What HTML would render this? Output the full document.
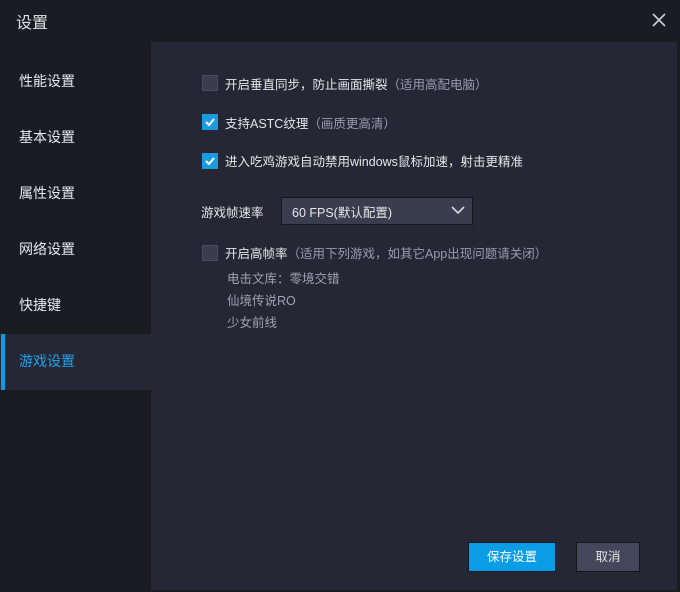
<!DOCTYPE html><html><head><meta charset="utf-8"><style>
*{margin:0;padding:0;box-sizing:border-box}
body{width:680px;height:592px;background:#1b1c22;font-family:"Liberation Sans","Noto Sans CJK SC",sans-serif;color:#e6e6ea;position:relative;overflow:hidden;font-size:12.5px}
.a{position:absolute;white-space:nowrap}
.side{font-size:14px;color:#e8e8ec;left:19px}
.panel{left:151px;top:42px;width:526px;height:548px;background:#252735}
.cb{width:16px;height:16px;background:#3a3d4b;border:1px solid #4a4d5c}
.cb.on{background:#1a9be0;border-color:#1a9be0}
.g{color:#9a9cab}
.l{color:#a0a2b0}
</style></head><body>
<div class="a" style="left:16px;top:9px;font-size:16px;color:#e0e0e4">设置</div>
<svg class="a" style="left:651px;top:12px" width="16" height="16"><path d="M2 2L14 14M14 2L2 14" stroke="#d0d0d4" stroke-width="1.6"/></svg>
<div class="a panel"></div>
<div class="a side" style="top:71px">性能设置</div>
<div class="a side" style="top:127px">基本设置</div>
<div class="a side" style="top:183px">属性设置</div>
<div class="a side" style="top:239px">网络设置</div>
<div class="a side" style="top:295px">快捷键</div>
<div class="a" style="left:0;top:334px;width:151px;height:56px;background:#252735"></div>
<div class="a" style="left:1px;top:334px;width:4px;height:56px;background:#0a9de6"></div>
<div class="a side" style="top:351px;color:#1fa3ea">游戏设置</div>

<div class="a cb" style="left:202px;top:75px"></div>
<div class="a" style="left:225px;top:74px">开启垂直同步，防止画面撕裂<span class="g">（适用高配电脑）</span></div>
<div class="a cb on" style="left:202px;top:114px"><svg width="14" height="14" style="position:absolute;left:0;top:0"><path d="M3 7L6 10L11 4" stroke="#fff" stroke-width="2" fill="none"/></svg></div>
<div class="a" style="left:225px;top:113px">支持ASTC纹理<span class="g">（画质更高清）</span></div>
<div class="a cb on" style="left:202px;top:153px"><svg width="14" height="14" style="position:absolute;left:0;top:0"><path d="M3 7L6 10L11 4" stroke="#fff" stroke-width="2" fill="none"/></svg></div>
<div class="a" style="left:225px;top:151px">进入吃鸡游戏自动禁用windows鼠标加速，射击更精准</div>

<div class="a" style="left:201px;top:202px">游戏帧速率</div>
<div class="a" style="left:281px;top:197px;width:192px;height:28px;background:#3a3d4d;border:1px solid #16171d"></div>
<div class="a" style="left:292px;top:202px">60 FPS(默认配置)</div>
<svg class="a" style="left:450px;top:204px" width="16" height="12"><path d="M2 3L8 9L14 3" stroke="#d8d8dc" stroke-width="1.6" fill="none"/></svg>

<div class="a cb" style="left:202px;top:245px"></div>
<div class="a" style="left:225px;top:243px">开启高帧率<span class="g">（适用下列游戏，如其它App出现问题请关闭）</span></div>
<div class="a l" style="left:227px;top:268px">电击文库：零境交错</div>
<div class="a l" style="left:227px;top:290px">仙境传说RO</div>
<div class="a l" style="left:227px;top:312px">少女前线</div>

<div class="a" style="left:468px;top:542px;width:88px;height:30px;background:#0a9de6;border:1px solid #0f1a28;text-align:center;line-height:28px;color:#fff">保存设置</div>
<div class="a" style="left:576px;top:542px;width:64px;height:30px;background:#444759;border:1px solid #16171d;text-align:center;line-height:28px;color:#e0e0e4">取消</div>
</body></html>
